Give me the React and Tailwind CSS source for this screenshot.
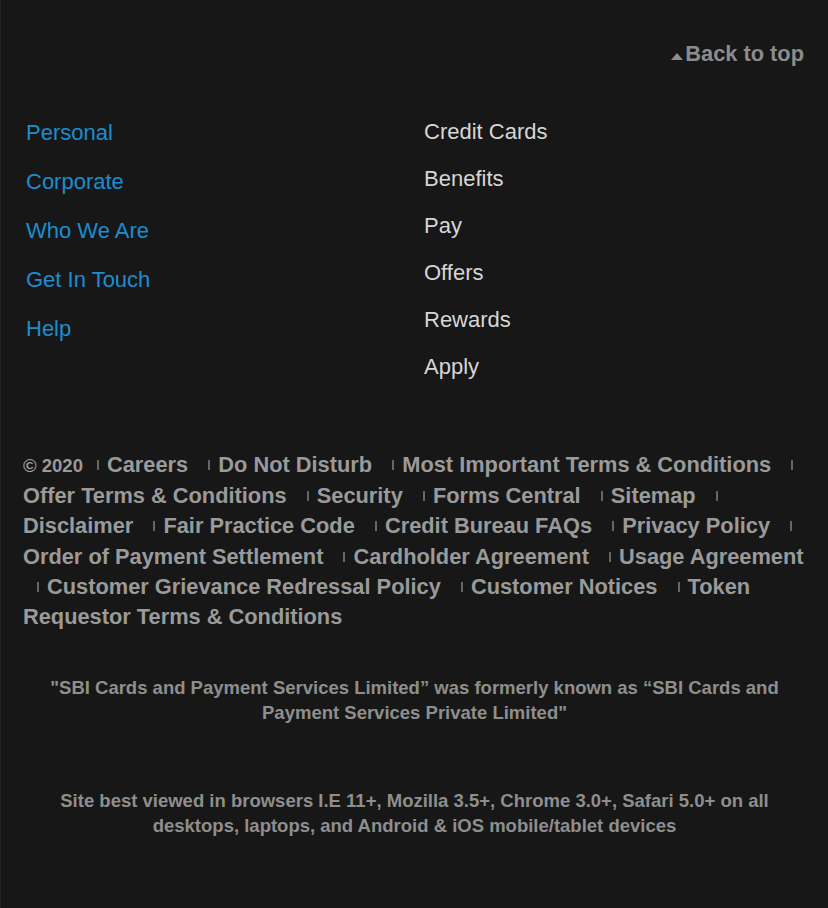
import { Fragment } from 'react';

const leftLinks = ['Personal', 'Corporate', 'Who We Are', 'Get In Touch', 'Help'];
const rightLinks = ['Credit Cards', 'Benefits', 'Pay', 'Offers', 'Rewards', 'Apply'];
const bottomLinks = [
  'Careers',
  'Do Not Disturb',
  'Most Important Terms & Conditions',
  'Offer Terms & Conditions',
  'Security',
  'Forms Central',
  'Sitemap',
  'Disclaimer',
  'Fair Practice Code',
  'Credit Bureau FAQs',
  'Privacy Policy',
  'Order of Payment Settlement',
  'Cardholder Agreement',
  'Usage Agreement',
  'Customer Grievance Redressal Policy',
  'Customer Notices',
  'Token Requestor Terms & Conditions',
];

function Sep() {
  return <span className="inline-block w-[2px] h-[10px] ml-[14px] mr-[2px] bg-[#666666] align-[2px]" />;
}

export default function App() {
  return (
    <div
      className="min-h-[908px] bg-[#171717] border-l border-[#242424] text-[#999999]"
      style={{ fontFamily: '"Liberation Sans", Arial, sans-serif' }}
    >
      {/* Back to top */}
      <div className="flex justify-end pt-[40px] pr-[24px]">
        <a href="#" className="flex items-end text-[21.8px] font-bold text-[#8c8c8c] leading-[28px]">
          <span className="w-0 h-0 mb-[8px] mr-[2px] border-l-[6px] border-r-[6px] border-b-[7px] border-l-transparent border-r-transparent border-b-[#8c8c8c]" />
          Back to top
        </a>
      </div>

      {/* Nav columns */}
      <div className="flex pl-[25px] mt-[50px]">
        <ul className="w-[398px] flex flex-col gap-[21px] pt-[1px]">
          {leftLinks.map((l) => (
            <li key={l}>
              <a href="#" className="text-[22px] leading-[28px] text-[#1b8dd0]">{l}</a>
            </li>
          ))}
        </ul>
        <ul className="flex flex-col gap-[19px]">
          {rightLinks.map((l) => (
            <li key={l}>
              <a href="#" className="text-[22px] leading-[28px] text-[#d6d6d6]">{l}</a>
            </li>
          ))}
        </ul>
      </div>

      {/* Bottom links */}
      <p className="mt-[69px] pl-[22px] pr-[20px] text-[21.8px] font-bold leading-[30.2px] text-[#9a9a9a]">
        <span className="text-[18.5px]">© 2020</span>
        {bottomLinks.map((l) => (
          <Fragment key={l}>
            <Sep />{' '}
            <a href="#">{l}</a>{' '}
          </Fragment>
        ))}
      </p>

      {/* Disclaimers */}
      <div className="mt-[43px] px-[36px] text-center text-[18.5px] font-bold leading-[25px] text-[#8e8e8e]">
        <p>"SBI Cards and Payment Services Limited” was formerly known as “SBI Cards and Payment Services Private Limited"</p>
        <p className="mt-[63px]">
          Site best viewed in browsers I.E 11+, Mozilla 3.5+, Chrome 3.0+, Safari 5.0+ on all desktops, laptops, and Android &amp; iOS mobile/tablet devices
        </p>
      </div>
    </div>
  );
}
